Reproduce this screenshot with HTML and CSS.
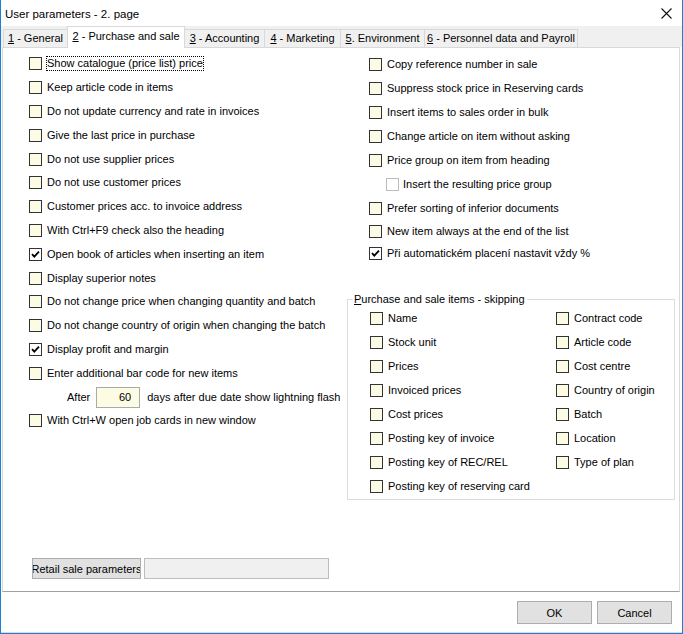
FILE: index.html
```html
<!DOCTYPE html>
<html>
<head>
<meta charset="utf-8">
<title>User parameters - 2. page</title>
<link rel="stylesheet" href="styles.css">
</head>
<body>
<div class="window">
  <div class="titlebar">
    <span class="title">User parameters - 2. page</span>
    <svg class="close" width="11" height="11" viewBox="0 0 11 11"><path d="M0.5 0.5L10.5 10.5M10.5 0.5L0.5 10.5" stroke="#111" stroke-width="1.1" fill="none"/></svg>
  </div>
  <div class="tabs">
    <div class="tab t1"><u>1</u> - General</div>
    <div class="tab t2 active"><u>2</u> - Purchase and sale</div>
    <div class="tab t3"><u>3</u> - Accounting</div>
    <div class="tab t4"><u>4</u> - Marketing</div>
    <div class="tab t5"><u>5</u>. Environment</div>
    <div class="tab t6"><u>6</u> - Personnel data and Payroll</div>
  </div>
  <div class="panel">
    <div class="cols">
      <div class="col-left">
        <div class="row"><span class="box"></span><span class="lbl focus">Show catalogue (price list) price</span></div>
        <div class="row"><span class="box"></span><span class="lbl">Keep article code in items</span></div>
        <div class="row"><span class="box"></span><span class="lbl">Do not update currency and rate in invoices</span></div>
        <div class="row"><span class="box"></span><span class="lbl">Give the last price in purchase</span></div>
        <div class="row"><span class="box"></span><span class="lbl">Do not use supplier prices</span></div>
        <div class="row"><span class="box"></span><span class="lbl">Do not use customer prices</span></div>
        <div class="row"><span class="box"></span><span class="lbl">Customer prices acc. to invoice address</span></div>
        <div class="row"><span class="box"></span><span class="lbl">With Ctrl+F9 check also the heading</span></div>
        <div class="row"><span class="box checked"><svg width="11" height="11" viewBox="0 0 11 11"><path d="M2 5.2L4.3 7.6L9 2.6" stroke="#000" stroke-width="1.8" fill="none"/></svg></span><span class="lbl">Open book of articles when inserting an item</span></div>
        <div class="row"><span class="box"></span><span class="lbl">Display superior notes</span></div>
        <div class="row"><span class="box"></span><span class="lbl">Do not change price when changing quantity and batch</span></div>
        <div class="row"><span class="box"></span><span class="lbl">Do not change country of origin when changing the batch</span></div>
        <div class="row"><span class="box checked"><svg width="11" height="11" viewBox="0 0 11 11"><path d="M2 5.2L4.3 7.6L9 2.6" stroke="#000" stroke-width="1.8" fill="none"/></svg></span><span class="lbl">Display profit and margin</span></div>
        <div class="row"><span class="box"></span><span class="lbl">Enter additional bar code for new items</span></div>
        <div class="row after-row"><span class="after">After</span><span class="num">60</span><span class="days">days after due date show lightning flash</span></div>
        <div class="row"><span class="box"></span><span class="lbl">With Ctrl+W open job cards in new window</span></div>
      </div>
      <div class="col-right">
        <div class="rrow"><span class="box"></span><span class="lbl">Copy reference number in sale</span></div>
        <div class="rrow"><span class="box"></span><span class="lbl">Suppress stock price in Reserving cards</span></div>
        <div class="rrow"><span class="box"></span><span class="lbl">Insert items to sales order in bulk</span></div>
        <div class="rrow"><span class="box"></span><span class="lbl">Change article on item without asking</span></div>
        <div class="rrow"><span class="box"></span><span class="lbl">Price group on item from heading</span></div>
        <div class="rrow indent"><span class="box disabled"></span><span class="lbl">Insert the resulting price group</span></div>
        <div class="rrow"><span class="box"></span><span class="lbl">Prefer sorting of inferior documents</span></div>
        <div class="rrow short"><span class="box"></span><span class="lbl">New item always at the end of the list</span></div>
        <div class="rrow mid"><span class="box checked"><svg width="11" height="11" viewBox="0 0 11 11"><path d="M2 5.2L4.3 7.6L9 2.6" stroke="#000" stroke-width="1.8" fill="none"/></svg></span><span class="lbl">Při automatickém placení nastavit vždy %</span></div>
        <fieldset class="group">
          <legend><u>P</u>urchase and sale items - skipping</legend>
          <div class="group-grid">
            <div class="grow"><span class="box"></span><span class="lbl">Name</span></div>
            <div class="grow"><span class="box"></span><span class="lbl">Contract code</span></div>
            <div class="grow"><span class="box"></span><span class="lbl">Stock unit</span></div>
            <div class="grow"><span class="box"></span><span class="lbl">Article code</span></div>
            <div class="grow"><span class="box"></span><span class="lbl">Prices</span></div>
            <div class="grow"><span class="box"></span><span class="lbl">Cost centre</span></div>
            <div class="grow"><span class="box"></span><span class="lbl">Invoiced prices</span></div>
            <div class="grow"><span class="box"></span><span class="lbl">Country of origin</span></div>
            <div class="grow"><span class="box"></span><span class="lbl">Cost prices</span></div>
            <div class="grow"><span class="box"></span><span class="lbl">Batch</span></div>
            <div class="grow"><span class="box"></span><span class="lbl">Posting key of invoice</span></div>
            <div class="grow"><span class="box"></span><span class="lbl">Location</span></div>
            <div class="grow"><span class="box"></span><span class="lbl">Posting key of REC/REL</span></div>
            <div class="grow"><span class="box"></span><span class="lbl">Type of plan</span></div>
            <div class="grow"><span class="box"></span><span class="lbl">Posting key of reserving card</span></div>
          </div>
        </fieldset>
      </div>
    </div>
    <div class="retail">
      <div class="retail-btn"><span>Retail sale parameters</span></div>
      <div class="retail-field"></div>
    </div>
  </div>
  <div class="footer">
    <div class="btn">OK</div>
    <div class="btn">Cancel</div>
  </div>
</div>
</body>
</html>
```

FILE: styles.css
```css
html, body {
  margin: 0;
  padding: 0;
  background: #ffffff;
}

.window {
  width: 683px;
  height: 634px;
  box-sizing: border-box;
  border: 1px solid #1c7fd1;
  border-top: none;
  background: #ffffff;
  display: flex;
  flex-direction: column;
  font-family: "Liberation Sans", Arial, sans-serif;
  font-size: 11px;
  color: #000;
}

.titlebar {
  height: 26px;
  flex: none;
  display: flex;
  align-items: center;
  justify-content: space-between;
  padding: 0 10px 0 4px;
  background: #ffffff;
}

.title {
  font-size: 11.5px;
  color: #000;
  padding-top: 1px;
}

.close {
  display: block;
  margin-top: 1px;
}

.tabs {
  height: 21px;
  flex: none;
  display: flex;
  align-items: flex-end;
  padding-left: 2px;
  background: #f0f0f0;
}

.tab {
  flex: none;
  box-sizing: border-box;
  height: 18px;
  border: 1px solid #d9d9d9;
  border-bottom: none;
  margin-right: -1px;
  background: #f0f0f0;
  font-size: 11px;
  line-height: 17px;
  text-align: center;
  white-space: nowrap;
  overflow: hidden;
}

.tab u { text-decoration: underline; }

.tab.active {
  height: 22px;
  margin-bottom: -1px;
  background: #ffffff;
  line-height: 19px;
  position: relative;
  z-index: 1;
}

.t1 { width: 65px; }
.t2 { width: 118px; }
.t3 { width: 81px; }
.t4 { width: 77px; }
.t5 { width: 85px; }
.t6 { width: 154px; }

.panel {
  flex: none;
  height: 545px;
  box-sizing: border-box;
  margin: 0 2px 0 1px;
  border: 1px solid #d9d9d9;
  border-bottom: 1px solid #a0a0a0;
  background: #ffffff;
  display: flex;
  flex-direction: column;
  padding: 4px 0 12px 26px;
}

.cols {
  display: grid;
  grid-template-columns: 318px 328px;
}

.row {
  height: 23.8px;
  display: flex;
  align-items: center;
  gap: 4px;
  white-space: nowrap;
}

.rrow {
  height: 24px;
  display: flex;
  align-items: center;
  gap: 4px;
  padding-left: 22px;
  white-space: nowrap;
}

.rrow.indent { padding-left: 39px; gap: 3px; }
.rrow.short { height: 22px; }
.rrow.mid { height: 23px; }

.box {
  flex: none;
  width: 13px;
  height: 13px;
  box-sizing: border-box;
  border: 1px solid #333333;
  background: #fcfce4;
  display: flex;
  align-items: center;
  justify-content: center;
}

.box svg { display: block; }

.box.checked { background: #ffffff; }

.box.disabled {
  border-color: #bcbcbc;
  background: #ffffff;
}

.lbl {
  border: 1px dotted transparent;
  line-height: 13px;
}

.lbl.focus {
  border-color: #000;
}

.after-row {
  padding-left: 38px;
  gap: 0;
}

.after { margin-right: 6px; }

.num {
  box-sizing: border-box;
  width: 44px;
  height: 21px;
  border: 1px solid #a9a9a9;
  background: #fcfce4;
  text-align: right;
  padding-right: 8px;
  line-height: 19px;
  margin-right: 7px;
}

.group {
  margin: 28px 0 0 0;
  padding: 0 0 1px 22px;
  border: 1px solid #dcdcdc;
  min-width: 0;
}

.group legend {
  padding: 0 2px 0 1px;
  margin-left: -17px;
  line-height: 13px;
}

.group-grid {
  display: grid;
  grid-template-columns: 186px 1fr;
}

.grow {
  height: 24px;
  display: flex;
  align-items: center;
  gap: 4px;
  white-space: nowrap;
}

.retail {
  margin-top: auto;
  margin-left: 3px;
  display: flex;
  gap: 3px;
}

.retail-btn {
  box-sizing: border-box;
  width: 109px;
  height: 21px;
  border: 1px solid #adadad;
  background: #e1e1e1;
  display: flex;
  align-items: center;
  justify-content: center;
  overflow: hidden;
  white-space: nowrap;
}

.retail-btn span { flex: none; }

.retail-field {
  box-sizing: border-box;
  width: 185px;
  height: 21px;
  border: 1px solid #bdbdbd;
  background: #f0f0f0;
}

.footer {
  flex: 1;
  display: flex;
  justify-content: flex-end;
  align-items: flex-start;
  gap: 5px;
  padding: 9px 10px 0 0;
  border-bottom: 1px solid #dadada;
}

.btn {
  box-sizing: border-box;
  width: 75px;
  height: 23px;
  border: 1px solid #adadad;
  background: #e1e1e1;
  display: flex;
  align-items: center;
  justify-content: center;
  font-size: 11px;
}
```
